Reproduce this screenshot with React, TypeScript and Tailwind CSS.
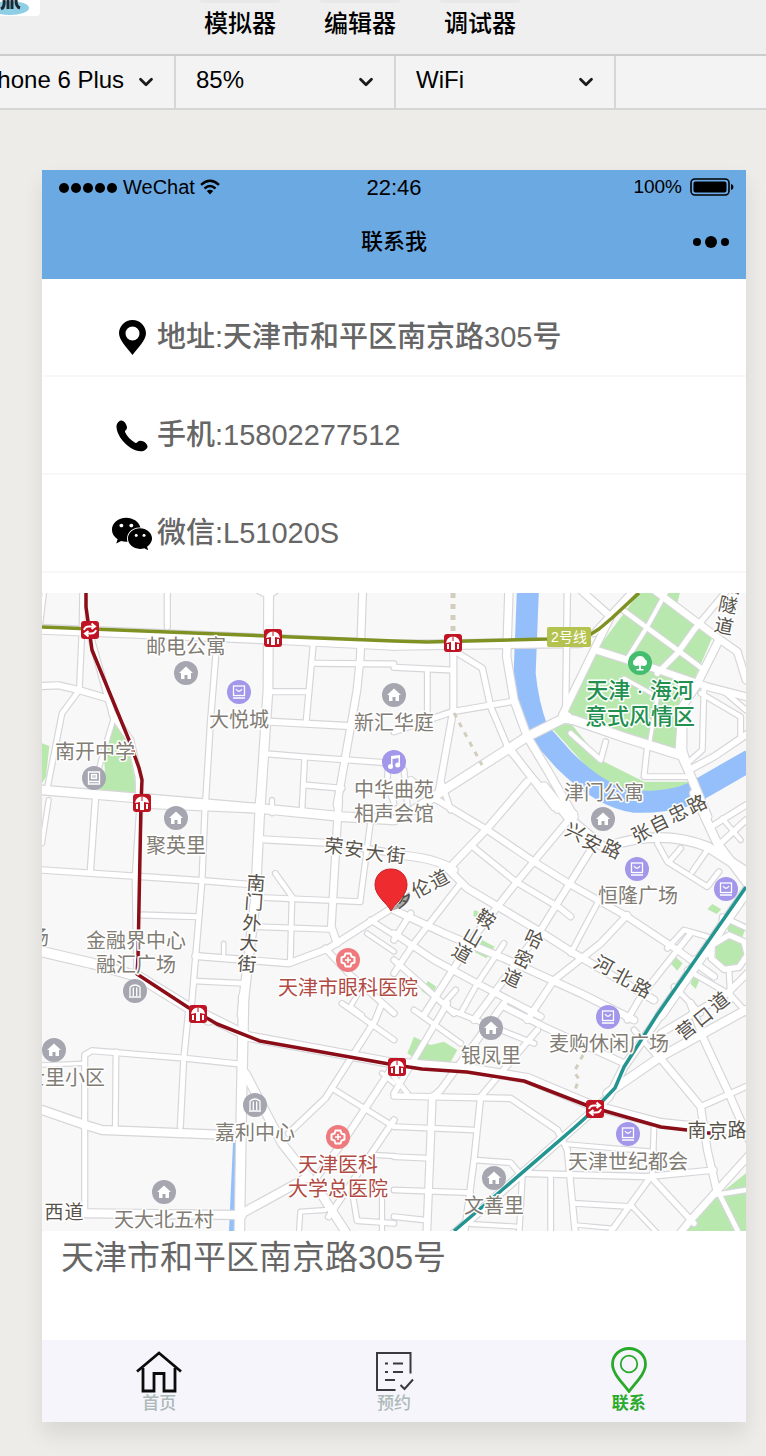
import type { ReactNode } from "react";
import { ChevronDown } from "lucide-react";
import { FaWeixin } from "react-icons/fa";

/* ---------- map data ---------- */

type Road = [width: number, d: string];
type Tile = { x: number; y: number; greens: string[]; roads: Road[] };

// Every tile keeps its geometry at three times the display scale.
const tiles: Tile[] = [
  {
    x: 0,
    y: -3,
    greens: [
      "M0,460 L22,468 L12,560 L0,580Z",
      "M215,400 L255,450 L285,600 L262,618 L165,608 L190,560 L185,490Z",
    ],
    roads: [
      [10, "M8,0 L-4,100"],
      [14, "M122,0 L120,120 L112,300"],
      [15, "M376,0 L376,110"],
      [18, "M0,288 L50,286 L110,300 L195,325"],
      [16, "M140,120 L215,385"],
      [14, "M112,300 L60,370 L15,600"],
      [12, "M215,385 L180,500 L165,560"],
      [18, "M210,370 L265,450 L290,560 L292,630"],
      [15, "M525,150 L505,400 L490,650"],
      [26, "M0,600 L300,625 L650,655"],
      [26, "M680,0 L678,300 L655,645"],
      [10, "M640,0 L680,20 L710,0"],
      [20, "M962,0 L955,200 L945,300 L885,645"],
      [15, "M815,150 L792,400"],
      [15, "M815,220 L1056,222"],
      [15, "M685,305 L800,305"],
      [18, "M685,395 L920,408"],
      [15, "M680,492 L780,500 L1056,520"],
      [14, "M788,505 L780,660"],
      [15, "M788,585 L900,595"],
      [26, "M0,118 L700,148 L1056,166"],
      [14, "M1040,510 L1035,580 L1056,640"],
    ],
  },
  {
    x: 352,
    y: -3,
    greens: [
      "M740,0 L860,0 L850,40 L960,130 L900,270 L860,300 L850,480 L520,385 L530,340 L600,190 L690,70Z",
      "M470,410 L530,400 L620,510 L750,575 L890,575 L840,605 L640,600Z",
    ],
    roads: [
      [22, "M345,0 L338,200 L360,330 L400,440 L460,540 L540,680"],
      [26, "M0,166 L560,158"],
      [18, "M178,170 L178,360 L135,600"],
      [15, "M0,232 L170,240"],
      [14, "M100,240 L100,385"],
      [16, "M0,425 L175,365 L350,335"],
      [16, "M185,185 L265,235 L290,350 L345,480 L440,590 L490,660"],
      [26, "M60,660 L150,600 L400,440 L520,380"],
      [26, "M510,385 L540,390 L700,445 L860,495"],
      [16, "M520,0 L515,360"],
      [20, "M505,375 L600,180 L650,80 L560,0"],
      [18, "M600,130 L720,0"],
      [20, "M605,180 L780,235 L940,290 L1056,320"],
      [14, "M680,55 L850,180 L930,240"],
      [20, "M780,0 L980,150 L1030,185 L1056,270"],
      [12, "M820,0 L760,110 L700,205"],
      [16, "M1000,0 L900,120 L850,190 L790,250"],
      [22, "M975,150 L905,290 L865,350 L855,490"],
      [10, "M690,265 L790,320 L765,470"],
      [14, "M530,430 L620,510 L635,455"],
      [14, "M760,470 L750,560 L880,560"],
      [24, "M860,490 L885,545 L940,680"],
      [18, "M885,540 L960,500 L1070,425"],
      [14, "M930,290 L925,480 L885,515"],
      [14, "M870,370 L870,480 L885,530"],
      [14, "M920,310 L1040,380 L1040,440"],
      [14, "M985,300 L1056,360"],
      [15, "M140,570 L170,660"],
      [20, "M350,480 L480,650"],
      [14, "M0,525 L30,540 L40,645"],
    ],
  },
  {
    x: 0,
    y: 207,
    greens: [],
    roads: [
      [16, "M160,0 L145,215"],
      [12, "M20,0 L0,130"],
      [16, "M0,210 L480,242 L640,255"],
      [16, "M295,0 L280,230 L285,520"],
      [15, "M490,0 L480,242 L450,600 L440,660"],
      [26, "M655,0 L640,300 L600,645"],
      [15, "M300,345 L465,350"],
      [26, "M300,10 L650,25 L900,50 L1056,60"],
      [18, "M660,118 L880,130 L1056,160"],
      [20, "M890,0 L868,380 L885,430"],
      [14, "M985,70 L955,300"],
      [14, "M670,293 L955,305"],
      [14, "M700,220 L750,290 L745,480"],
      [14, "M640,380 L865,388"],
      [18, "M460,468 L740,490 L860,445 L1056,320"],
      [10, "M545,430 L545,465"],
      [14, "M455,543 L605,550"],
      [28, "M0,455 L150,490 L290,530 L500,660"],
      [16, "M850,445 L920,520 L1056,640"],
      [12, "M960,560 L925,620 L960,645"],
      [14, "M985,360 L1056,405"],
      [12, "M975,400 L1056,455"],
      [12, "M690,0 L690,40 M780,0 L780,40"],
    ],
  },
  {
    x: 352,
    y: 207,
    greens: [
      "M955,312 L982,328 L968,342 L940,328Z",
      "M995,362 L1056,380 L1045,412 L1005,405Z",
      "M838,465 L866,490 L850,512 L828,488Z",
      "M900,518 L922,528 L905,567 L890,552Z",
      "M265,420 L302,440 L277,475 L243,457Z",
      "M102,543 L127,560 L110,592 L82,572Z",
      "M240,330 L255,335 L248,355 L238,348Z",
      "M962,400 L975,385 L980,400 L965,420Z",
      "M1005,415 L1040,430 L1048,462 L1030,492 L995,498 L965,475 L965,440Z",
    ],
    roads: [
      [20, "M400,-55 L280,85 L165,205"],
      [18, "M540,40 L365,250 L240,410 L90,645"],
      [16, "M200,250 L60,430 L0,520"],
      [18, "M590,150 L440,390 L240,660"],
      [18, "M700,345 L620,430 L480,540 L400,660"],
      [14, "M610,310 L530,460"],
      [16, "M890,400 L740,590 L700,660"],
      [18, "M50,-60 L130,0 L280,90 L420,185 L540,260 L700,350 L850,450 L960,530"],
      [16, "M230,135 L365,245 L500,325 L530,350"],
      [20, "M150,195 L220,265 L430,390 L540,460 L780,600"],
      [20, "M0,330 L150,400 L330,475 L560,580 L720,660"],
      [18, "M0,400 L120,480 L250,550 L440,650"],
      [16, "M0,480 L180,640"],
      [14, "M150,610 L185,570"],
      [14, "M330,430 L250,550 L200,640"],
      [22, "M0,165 Q120,170 180,210"],
      [16, "M50,340 L0,420"],
      [26, "M450,-40 L530,60 L620,135"],
      [26, "M640,140 Q800,85 940,140 L1056,215"],
      [24, "M900,-20 L970,130 L1060,250"],
      [16, "M960,75 L1056,15"],
      [16, "M980,130 L1056,60"],
      [12, "M985,55 L1040,120"],
      [14, "M790,130 L820,185 L940,260 L975,215"],
      [14, "M860,145 L830,180"],
      [14, "M940,150 L895,215"],
      [28, "M1066,262 L800,645"],
      [14, "M820,445 L870,390 L940,410"],
      [16, "M1005,405 L1050,425 L1060,465 L1035,502 L990,508 L952,475 L955,435Z"],
      [14, "M1005,510 L1010,600"],
      [14, "M980,400 L985,350 L1060,385"],
      [14, "M890,480 L955,460"],
      [14, "M840,560 L920,640"],
      [18, "M800,700 L1000,580 L1060,520"],
      [14, "M880,510 L1010,585 L1060,640"],
    ],
  },
  {
    x: 0,
    y: 417,
    greens: [],
    roads: [
      [15, "M440,0 L425,150 L415,350"],
      [15, "M128,600 L128,135 L150,122 L430,145 L600,163"],
      [10, "M0,165 L125,160"],
      [14, "M222,125 L220,350"],
      [24, "M0,300 L130,345 L180,360 L560,375"],
      [24, "M130,610 L600,615"],
      [28, "M605,-40 L598,300 L592,680"],
      [24, "M610,190 L720,400 L830,540 L920,680"],
      [26, "M460,0 L620,80 L1056,160"],
      [24, "M600,610 L800,500"],
      [16, "M740,370 L850,265 L1000,30 L1020,-20"],
      [14, "M870,235 L1056,350"],
      [18, "M1056,165 L900,400 L810,520"],
      [16, "M1056,330 L860,620"],
      [12, "M1000,435 L1056,438"],
      [12, "M770,680 L775,605 L850,600"],
      [14, "M930,540 L945,632 L1056,640"],
      [12, "M1020,560 L1020,680"],
      [14, "M900,-20 L1056,90"],
      [12, "M1020,190 L1056,220"],
    ],
  },
  {
    x: 352,
    y: 417,
    greens: [
      "M60,80 L110,105 L150,95 L190,120 L165,165 L70,150 L40,130Z",
      "M850,680 L970,560 L1030,680Z",
      "M1056,490 L1056,540 L980,550Z",
      "M985,560 L1056,548 L1056,680 L1045,680Z",
    ],
    roads: [
      [26, "M0,158 L220,175 L400,205 L590,285 L800,340 L1070,368"],
      [22, "M810,0 L690,170 L645,260 L600,300 L170,680"],
      [18, "M330,-20 L140,240 L115,262"],
      [16, "M160,-20 L0,250"],
      [16, "M430,60 L260,260 L240,450 L210,680"],
      [14, "M60,0 L200,100"],
      [14, "M170,0 L420,100"],
      [18, "M330,-10 L450,50 L690,160"],
      [14, "M0,200 L40,250"],
      [16, "M0,258 L350,265 L490,360 L520,420 L545,680"],
      [20, "M115,260 L98,680"],
      [14, "M0,350 L240,360"],
      [14, "M0,440 L110,445"],
      [14, "M240,450 L350,458 L385,500 L375,680"],
      [14, "M0,540 L230,548"],
      [14, "M0,620 L90,630"],
      [12, "M230,642 L375,650"],
      [16, "M385,490 L760,500 L960,480"],
      [12, "M520,403 L780,425"],
      [14, "M780,350 L775,500"],
      [14, "M470,500 L470,680"],
      [14, "M540,580 L715,590"],
      [10, "M545,645 L660,655"],
      [16, "M770,500 L640,680"],
      [16, "M770,500 L900,640"],
      [12, "M715,590 L800,680"],
      [20, "M1070,430 L890,630 L850,680"],
      [14, "M960,555 L1056,540 M975,550 L1040,680"],
      [20, "M890,-20 L930,90 L1000,240 L1070,400"],
      [20, "M795,140 L920,290 L940,420 L970,550"],
      [24, "M640,250 L800,140 L1056,0"],
      [16, "M920,290 L1056,230"],
      [14, "M720,60 L790,140"],
    ],
  },
];

const river =
  "M402,-9 L392,250 Q400,340 430,420 L510,510 Q620,620 720,635 Q860,640 930,590 L1070,510";

const halo = "#ffffff";

type Kind = "home" | "shop" | "music" | "school" | "bank" | "hospital" | "tree";

const poiColors: Record<Kind, string> = {
  home: "#a5a6b0",
  shop: "#a297ea",
  music: "#a297ea",
  school: "#a5a6b0",
  bank: "#a5a6b0",
  hospital: "#ee7a7d",
  tree: "#45bd6f",
};

const poiGlyphs: Record<Kind, ReactNode> = {
  home: <path fill="#fff" d="M0,-6.500 L7,0 H5 V6 H1.500 V2 H-1.500 V6 H-5 V0 H-7Z" />,
  shop: (
    <g fill="none" stroke="#fff" strokeWidth="1.300">
      <rect x="-5.500" y="-6" width="11" height="9.500" />
      <path d="M-6,6 H6 M-3,-3 Q0,1.500 3,-3" />
    </g>
  ),
  music: (
    <g fill="#fff">
      <path d="M-3,-6 L6,-7 V3 H4.500 V-4 L-1.500,-3 V5 H-3Z" />
      <circle cx="-3.500" cy="4.500" r="2.500" />
      <circle cx="3.700" cy="3" r="2.500" />
    </g>
  ),
  school: (
    <g fill="none" stroke="#fff" strokeWidth="1.300">
      <path d="M-5.500,4 V-6 H5.500 V6 H-5.500 V3.500 H5" />
      <rect x="-2.500" y="-3.500" width="5" height="4" fill="#fff" fillOpacity="0.5" />
    </g>
  ),
  bank: (
    <path
      fill="none"
      stroke="#fff"
      strokeWidth="1.300"
      d="M-5,-4 Q0,-8 5,-4 M-6,6 H6 M-5,-4 V5 M-1.700,-3.500 V5 M1.700,-3.500 V5 M5,-4 V5"
    />
  ),
  hospital: (
    <g>
      <path
        fill="none"
        stroke="#fff"
        strokeWidth="2"
        strokeLinejoin="round"
        d="M-2.500,-6.500 H2.500 L3.500,-3.500 L6.500,-2.500 V2.500 L3.500,3.500 L2.500,6.500 H-2.500 L-3.500,3.500 L-6.500,2.500 V-2.500 L-3.500,-3.500Z"
      />
      <path stroke="#fff" strokeWidth="1.600" d="M-3,0 H3 M0,-3 V3" />
    </g>
  ),
  tree: (
    <path
      fill="#fff"
      d="M-1,6 L-1,2.500 Q-7,4 -7,-0.500 Q-7,-3 -5,-3.500 Q-4,-7 0,-7 Q4,-7 5,-3.500 Q7,-3 7,-0.500 Q7,4 1,2.500 L1,6 H3.500 V7.500 H-3.500 V6Z"
    />
  ),
};

const pois: [Kind, number, number][] = [
  ["home", 144, 80],
  ["home", 352, 102],
  ["home", 134, 225],
  ["home", 561, 226],
  ["home", 12, 457],
  ["home", 122, 599],
  ["home", 449, 435],
  ["home", 452, 585],
  ["shop", 197, 99],
  ["shop", 595, 276],
  ["shop", 684, 296],
  ["shop", 566, 424],
  ["shop", 586, 541],
  ["music", 352, 169],
  ["school", 52, 185],
  ["bank", 93, 398],
  ["bank", 213, 512],
  ["hospital", 306, 367],
  ["hospital", 296, 544],
  ["tree", 598, 70],
];

const placeLabels: [string, number, number, string?][] = [
  ["邮电公寓", 144, 60],
  ["大悦城", 197, 133],
  ["新汇华庭", 352, 136],
  ["南开中学", 53, 165],
  ["中华曲苑", 352, 203],
  ["相声会馆", 352, 227],
  ["聚英里", 134, 259],
  ["津门公寓", 562, 206],
  ["恒隆广场", 596, 309],
  ["金融界中心", 94, 354],
  ["融汇广场", 94, 378],
  ["场", -3, 351],
  ["银凤里", 449, 469],
  ["麦购休闲广场", 567, 457],
  ["嘉利中心", 213, 546],
  ["天津世纪都会", 586, 575],
  ["文善里", 452, 619],
  ["天大北五村", 122, 633],
  ["士里小区", 23, 491],
  ["天津市眼科医院", 306, 401, "#b04a42"],
  ["天津医科", 296, 578, "#b04a42"],
  ["大学总医院", 296, 602, "#b04a42"],
];

// A street name is set one character at a time along its road.
const streetNames: { angle: number; chars: [string, number, number][] }[] = [
  { angle: 6, chars: [["荣", 292, 253], ["安", 312, 256], ["大", 333, 260], ["街", 354, 262]] },
  { angle: -28, chars: [["多", 360, 305], ["伦", 379, 295], ["道", 397, 286]] },
  { angle: 30, chars: [["鞍", 444, 326], ["山", 431, 344], ["道", 420, 360]] },
  { angle: 25, chars: [["哈", 492, 346], ["密", 481, 366], ["道", 470, 385]] },
  { angle: 28, chars: [["河", 562, 372], ["北", 581, 384], ["路", 600, 395]] },
  { angle: 25, chars: [["兴", 533, 239], ["安", 550, 250], ["路", 570, 256]] },
  { angle: -26, chars: [["张", 599, 240], ["自", 617, 230], ["忠", 636, 220], ["路", 655, 211]] },
  { angle: -38, chars: [["营", 644, 437], ["口", 661, 424], ["道", 677, 409]] },
  { angle: 4, chars: [["南", 214, 290], ["门", 212, 309], ["外", 210, 330], ["大", 207, 350], ["街", 205, 371]] },
  { angle: 0, chars: [["南", 655, 537], ["京", 676, 538], ["路", 695, 537]] },
  { angle: 12, chars: [["路", 691, -8], ["隧", 686, 12], ["道", 682, 33]] },
  { angle: 0, chars: [["西", 12, 619], ["道", 32, 619]] },
];

const stations: [number, number][] = [
  [231, 45],
  [411, 50],
  [100, 210],
  [156, 421],
  [355, 474],
];
const interchanges: [number, number][] = [
  [48, 37],
  [553, 516],
];

function RoadLayer({ casing }: { casing: boolean }) {
  return (
    <g fill="none" strokeLinejoin="round" strokeLinecap="round" stroke={casing ? "#d6d6da" : "#ffffff"}>
      {tiles.map((tile, i) => (
        <g key={i} transform={`translate(${tile.x} ${tile.y}) scale(0.33333)`}>
          {tile.roads.map(([width, d], j) => (
            <path key={j} d={d} strokeWidth={casing ? width + 7 : width} />
          ))}
        </g>
      ))}
    </g>
  );
}

function CityMap() {
  return (
    <svg viewBox="0 0 704 638" className="block w-full" role="img" aria-label="地图">
      <rect width="704" height="638" fill="#f8f8f8" />
      {tiles.map((tile, i) => (
        <g key={i} fill="#b9e8ae" transform={`translate(${tile.x} ${tile.y}) scale(0.33333)`}>
          {tile.greens.map((d, j) => (
            <path key={j} d={d} />
          ))}
        </g>
      ))}
      <g transform="translate(352 -3) scale(0.33333)" fill="none">
        <path d={river} stroke="#94bffb" strokeWidth="66" />
      </g>
      <path d="M191,550 H194 L193,638 H187Z" fill="#94bffb" />
      <RoadLayer casing />
      <RoadLayer casing={false} />

      <g fill="none" stroke="#d2cdbd" strokeWidth="5" strokeDasharray="5 6">
        <path d="M411,0 V38" />
        <path d="M412,120 L440,172" strokeWidth="3" />
        <path d="M541,462 L532,479 L537,486 L533,497" strokeWidth="3" />
      </g>

      <g fill="none" strokeWidth="3.500" strokeLinejoin="round">
        <path stroke="#7e9122" d="M0,34 L352,48 L385,49 L505,46 L549,41 L557,36 L570,25 L597,0" />
        <path stroke="#239490" d="M704,294 L615,422 L582,474 L573,495 L552,517 L532,535 L460,597 L412,638" />
        <path
          stroke="#8b0d18"
          d="M44,0 V14 L50,57 L87,147 L97,175 L100,187 L99,210 L96,364 L95,381 L147,415 L163,424 L175,431 L218,448 L347,471 L380,476 L425,479 L482,488 L549,514 L619,534 L645,537"
        />
        <path stroke="#8b0d18" strokeDasharray="4 8" d="M665,540 L700,541" />
      </g>

      {stations.map(([x, y]) => (
        <g key={`${x}-${y}`} transform={`translate(${x} ${y})`}>
          <rect x="-9" y="-9" width="18" height="18" rx="3" fill="#c01424" />
          <path fill="#fff" d="M-7,0 Q-6,-6.500 0,-6.500 Q6,-6.500 7,0 L2,-1 V7 H-2 V-1Z" />
          <path stroke="#fff" strokeWidth="2" d="M-5,1 V6 M5,1 V6" />
          <path stroke="#c01424" strokeWidth="1" d="M0,-7 V-2" />
        </g>
      ))}
      {interchanges.map(([x, y]) => (
        <g key={`${x}-${y}`} transform={`translate(${x} ${y})`}>
          <rect x="-9" y="-9" width="18" height="18" rx="3" fill="#c01424" />
          <path
            fill="none"
            stroke="#fff"
            strokeWidth="2"
            d="M-6,0 Q-5,-3.500 -1,-3.500 H5 M1.500,-6.500 L5,-3.500 L1.500,-1 M6,0 Q5,3.500 1,3.500 H-5 M-1.500,6.500 L-5,3.500 L-1.500,1"
          />
        </g>
      ))}

      <rect x="505" y="34" width="44" height="20" rx="2" fill="#b4c350" />
      <text x="527" y="49" fontSize="14" fill="#ffffff" textAnchor="middle">
        2号线
      </text>

      {pois.map(([kind, x, y]) => (
        <g key={`${x}-${y}`} transform={`translate(${x} ${y})`}>
          <circle r="12" fill={poiColors[kind]} />
          {poiGlyphs[kind]}
        </g>
      ))}

      <g textAnchor="middle" stroke={halo} strokeWidth="3" strokeLinejoin="round" paintOrder="stroke">
        <g fontSize="20">
          {placeLabels.map(([name, x, y, color]) => (
            <text key={`${name}-${y}`} x={x} y={y + 1} fill={color ?? "#817c74"}>
              {name}
            </text>
          ))}
        </g>
        <g fontSize="19" fill="#57534b">
          {streetNames.map((street) =>
            street.chars.map(([char, x, y]) => (
              <text key={`${char}-${x}-${y}`} transform={`translate(${x} ${y}) rotate(${street.angle})`} y="7">
                {char}
              </text>
            )),
          )}
        </g>
        <g fontSize="22" fill="#229150" className="font-medium">
          <text x="598" y="105">
            天津 · 海河
          </text>
          <text x="598" y="131">意式风情区</text>
        </g>
      </g>

      <path d="M349,318 Q362,303 367,299 Q371,305 363,312 Q356,316 349,318Z" fill="#444444" fillOpacity="0.45" />
      <path
        d="M349,318 C345,310 333,303 333,292 C333,282 340,276 349,276 C358,276 365,282 365,292 C365,303 353,310 349,318Z"
        fill="#ee2b2f"
        stroke="#c81f26"
        strokeWidth="1"
      />
    </svg>
  );
}

/* ---------- icons ---------- */

function PinIcon() {
  return (
    <svg viewBox="0 0 27 36" className="h-9 w-[27px]" aria-hidden="true">
      <path
        fillRule="evenodd"
        d="M13.500,0 C21,0 27,6 27,13.300 C27,20 19,28 13.500,35 C8,28 0,20 0,13.300 C0,6 6,0 13.500,0Z M13.500,6.500 A7,7 0 1 0 13.500,20.500 A7,7 0 1 0 13.500,6.500Z"
      />
    </svg>
  );
}

function PhoneIcon() {
  return (
    <svg viewBox="0 0 32 32" className="size-8" aria-hidden="true">
      <path d="M5,0.500 C8,0 11,5 11,7.500 C11,10 8.500,10.500 9,12 C11,16.500 15,20.500 19.500,23 C21,23.500 21.500,20.800 24.500,20.800 C27.500,20.800 31.500,23.800 31.500,26.500 C31.500,29 28,31.500 24.500,31.300 C13.500,30.500 1,17.500 0.500,7 C0.300,4 2.500,1 5,0.500Z" />
    </svg>
  );
}

function WifiIcon() {
  return (
    <svg viewBox="0 0 20 16" className="h-4 w-5" aria-hidden="true">
      <g fill="none" stroke="#000" strokeWidth="2.400">
        <path d="M1,5.800 Q10,-2.400 19,5.800" />
        <path d="M4.500,9.500 Q10,4.600 15.500,9.500" />
      </g>
      <path d="M10,15.500 L6.800,12 Q10,9.500 13.200,12Z" />
    </svg>
  );
}

function BatteryIcon() {
  return (
    <svg viewBox="0 0 44 18" className="h-[18px] w-11" aria-hidden="true">
      <rect x="1" y="1" width="38" height="16" rx="4" fill="none" stroke="#000" strokeWidth="1.600" />
      <rect x="3.500" y="3.500" width="33" height="11" rx="2" />
      <path d="M41,6 Q43.500,6.500 43.500,9 Q43.500,11.500 41,12Z" />
    </svg>
  );
}

function HomeIcon() {
  return (
    <svg viewBox="0 0 48 42" className="h-[42px] w-12" fill="none" stroke="#0b0b0b" strokeWidth="2.800" aria-hidden="true">
      <path d="M2,20.500 L24,2 L46,20.500" />
      <path d="M8,17 V40 H19 V22.500 H29 V40 H40 V17" />
    </svg>
  );
}

function ListIcon() {
  return (
    <svg viewBox="0 0 40 42" className="h-[42px] w-10" fill="none" stroke="#3b383e" strokeWidth="2" aria-hidden="true">
      <path d="M21.500,39 H3 V2 H36.500 V22.500" />
      <path d="M11,12.500 H14 M19,12.500 H29 M11,21 H14 M19,21 H29 M11,29 H21" />
      <path d="M26.500,34 L30.500,38 L39,28.500" />
    </svg>
  );
}

function ContactIcon() {
  return (
    <svg viewBox="0 0 36 46" className="h-[46px] w-9" fill="none" stroke="#29aa2b" aria-hidden="true">
      <path strokeWidth="2.800" d="M18,44.500 C12,36 1.500,27 1.500,17 C1.500,8 9,1.500 18,1.500 C27,1.500 34.500,8 34.500,17 C34.500,27 24,36 18,44.500Z" />
      <circle cx="18" cy="17" r="8.300" strokeWidth="1.800" />
    </svg>
  );
}

function BrandMark() {
  return (
    <svg viewBox="0 0 40 16" className="h-4 w-10" aria-hidden="true">
      <path d="M0,0 H40 V12 Q40,16 36,16 H0Z" fill="#ffffff" />
      <ellipse cx="10" cy="8" rx="19" ry="7" fill="#8fcfe6" />
      <path d="M4,0 Q5,7 1,9 M8,0 V9 M12,0 V9 M16,0 Q16,7 20,8" fill="none" stroke="#1b2a33" strokeWidth="3" />
    </svg>
  );
}

/* ---------- page ---------- */

function ToolbarSelect({ label, value }: { label: string; value: string }) {
  return (
    <div className="relative w-[220px] shrink-0 border-r-2 border-[#d6d6d6]">
      <select
        aria-label={label}
        defaultValue={value}
        className="h-full w-full appearance-none bg-transparent pb-1 pl-5 text-2xl text-black outline-none"
      >
        <option>{value}</option>
      </select>
      <ChevronDown
        className="pointer-events-none absolute top-1/2 right-[17px] size-[22px] -translate-y-1/2 text-[#1a1a1a]"
        strokeWidth={3}
      />
    </div>
  );
}

function ContactRow({ icon, children }: { icon: ReactNode; children: ReactNode }) {
  return (
    <li className="flex h-[98px] items-center gap-[5px] border-b-2 border-[#f8f8f8] pt-[22px] pl-[70px] text-[29px] font-medium text-[#666666]">
      <span className="flex w-10 shrink-0 justify-center text-black">{icon}</span>
      <span>{children}</span>
    </li>
  );
}

function Tab({ icon, label, active }: { icon: ReactNode; label: string; active?: boolean }) {
  return (
    <a
      href="#"
      aria-current={active ? "page" : undefined}
      className={`flex flex-1 flex-col items-center justify-end gap-px pb-2 text-[17px] leading-5 ${
        active ? "font-bold text-[#29aa2b]" : "font-medium text-[#adb9b9]"
      }`}
    >
      {icon}
      {label}
    </a>
  );
}

export default function App() {
  return (
    <div className="min-h-screen overflow-hidden bg-[#edece8] pb-[34px] font-['Liberation_Sans','Noto_Sans_CJK_SC',sans-serif] text-black">
      <header className="border-b-2 border-[#cccccc] bg-[#efefef]">
        <div className="flex h-[54px] items-start">
          <BrandMark />
          <nav className="ml-[152px] flex gap-6 text-2xl leading-8 font-medium">
            {["模拟器", "编辑器", "调试器"].map((name) => (
              <button key={name} type="button" className="flex w-24 flex-col items-center gap-[5px]">
                <span className="h-[3px] w-20 rounded-b bg-[#e8e8e8]" />
                <span>{name}</span>
              </button>
            ))}
          </nav>
        </div>
      </header>

      <div className="flex h-[54px] border-b-2 border-[#d6d6d6] bg-[#f3f3f3]">
        <div className="-ml-11 flex">
          <ToolbarSelect label="设备" value="iPhone 6 Plus" />
          <ToolbarSelect label="缩放" value="85%" />
          <ToolbarSelect label="网络" value="WiFi" />
        </div>
      </div>

      <main className="mt-[60px] mr-5 ml-[42px] bg-white shadow-[0_12px_20px_rgba(0,0,0,0.09)]">
        <div className="h-[109px] bg-[#6ba9e3]">
          <div className="grid h-[34px] grid-cols-3 items-center px-3">
            <div className="flex items-center gap-[5px] pl-1 text-xl">
              <svg viewBox="0 0 60 12" className="h-3 w-[60px]" aria-hidden="true">
                {[6, 18, 30, 42, 54].map((cx) => (
                  <circle key={cx} cx={cx} cy="7" r="5" />
                ))}
              </svg>
              <span>WeChat</span>
              <WifiIcon />
            </div>
            <div className="text-center text-[22px]">22:46</div>
            <div className="flex items-center justify-end gap-2 text-[19px]">
              <span>100%</span>
              <BatteryIcon />
            </div>
          </div>
          <div className="grid h-[75px] grid-cols-3 items-center px-4">
            <h1 className="col-start-2 text-center text-[22px] font-medium">联系我</h1>
            <button type="button" aria-label="更多" className="justify-self-end">
              <svg viewBox="0 0 38 14" className="h-[14px] w-[38px]" aria-hidden="true">
                <circle cx="5" cy="7" r="4" />
                <circle cx="19" cy="7" r="6" />
                <circle cx="33" cy="7" r="4" />
              </svg>
            </button>
          </div>
        </div>

        <ul>
          <ContactRow icon={<PinIcon />}>地址:天津市和平区南京路305号</ContactRow>
          <ContactRow icon={<PhoneIcon />}>手机:15802277512</ContactRow>
          <ContactRow icon={<FaWeixin className="size-[42px] shrink-0" />}>微信:L51020S</ContactRow>
        </ul>

        <div className="mt-5">
          <CityMap />
        </div>

        <p className="h-[109px] pl-[19px] text-[33px] leading-[54px] text-[#666666]">天津市和平区南京路305号</p>

        <nav className="flex h-[82px] bg-[#f6f5fb]">
          <Tab icon={<HomeIcon />} label="首页" />
          <Tab icon={<ListIcon />} label="预约" />
          <Tab icon={<ContactIcon />} label="联系" active />
        </nav>
      </main>
    </div>
  );
}
